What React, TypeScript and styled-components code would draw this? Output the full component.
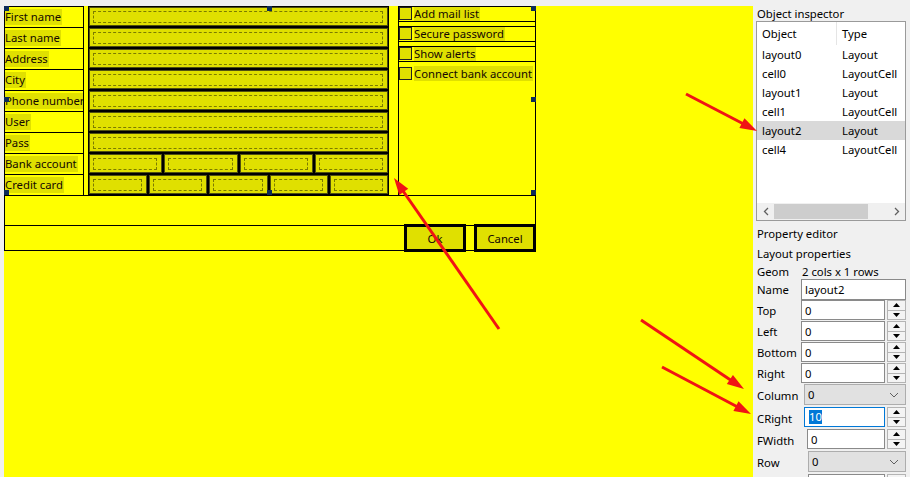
import React from "react";
import styled, { createGlobalStyle, css } from "styled-components";

const GlobalStyle = createGlobalStyle`
  html, body { margin: 0; padding: 0; background: #f0f0f0; }
  body {
    font-family: "Noto Sans", "Open Sans", sans-serif;
    font-size: 11.3px;
    color: #000;
    overflow: hidden;
  }
  * { box-sizing: border-box; }
`;

const Screen = styled.div`
  position: relative;
  width: 910px;
  height: 477px;
  display: flex;
  background: #f0f0f0;
  overflow: hidden;
`;

/* ---------- design canvas ---------- */

const DesignArea = styled.div`
  width: 753px;
  flex: none;
  padding: 6px 0 0 4px;
  display: flex;
`;

const Canvas = styled.div`
  flex: 1;
  height: 471px;
  background: #ffff00;
`;

const FormFrame = styled.div`
  width: 532px;
  display: flex;
  flex-direction: column;
  & > * { flex-shrink: 0; }
`;

const TopSection = styled.div`
  position: relative;
  height: 189px;
  display: grid;
  grid-template-columns: 80px 1fr 138px;
`;

const LabelsCol = styled.div`
  border-left: 1px solid #000;
  border-right: 1px solid #000;
  display: flex;
  flex-direction: column;
`;

const LabelCell = styled.div`
  height: 21px;
  flex: none;
  border-top: 1px solid #000;
  overflow: hidden;
  white-space: nowrap;
`;

const Highlight = styled.span`
  display: inline-block;
  background: #e0e000;
  line-height: 16px;
  margin-top: 2px;
  padding-right: 1px;
  color: #140800;
`;

const InputsCol = styled.div`
  margin: 0 9px 0 4px;
  display: flex;
  flex-direction: column;
`;

const FieldRow = styled.div`
  height: 21px;
  flex: none;
  display: flex;
`;

const FieldBox = styled.div`
  flex: 1;
  border: 1px solid #000;
  box-shadow: inset 0 0 0 1px #505010;
  background: #e0e000;
  padding: 4px 5px 3px 4px;
  display: flex;
`;

const DashRect = styled.div`
  flex: 1;
  border: 1px dashed #7c7c00;
`;

const ChecksPanel = styled.div`
  border-left: 1px solid #000;
  border-right: 1px solid #000;
  display: flex;
  flex-direction: column;
  gap: 4px;
`;

const CheckRow = styled.div<{ $bare?: boolean }>`
  height: 16px;
  flex: none;
  display: flex;
  align-items: flex-start;
  white-space: nowrap;
  overflow: hidden;
  ${(p) =>
    p.$bare
      ? css`padding-top: 0;`
      : css`
          border-top: 1px solid #000;
          border-bottom: 1px solid #000;
        `}
`;

const CheckBox = styled.span<{ $bare?: boolean }>`
  flex: none;
  width: 13px;
  height: 13px;
  margin-top: ${(p) => (p.$bare ? 1 : 0)}px;
  border: 1px solid #222;
  background: #e0e000;
`;

const CheckText = styled.span<{ $bare?: boolean }>`
  margin-left: 2px;
  background: #e0e000;
  line-height: ${(p) => (p.$bare ? 15 : 14)}px;
  padding-right: 1px;
  overflow: hidden;
  color: #140800;
`;

const EmptyRow = styled.div`
  height: 30px;
  border-top: 1px solid #000;
  border-left: 1px solid #000;
  border-right: 1px solid #000;
`;

const ButtonsRow = styled.div`
  height: 26px;
  border-top: 1px solid #000;
  border-left: 1px solid #000;
  border-bottom: 1px solid #000;
  display: flex;
  justify-content: flex-end;
  align-items: flex-start;
  gap: 8px;
`;

const DesignButton = styled.div`
  width: 62px;
  height: 28px;
  margin-top: -2px;
  border: 3px solid #000;
  background: #e0e000;
  display: flex;
  align-items: center;
  justify-content: center;
  color: #140800;
`;

const Handle = styled.span<{ $x: "l" | "c" | "r"; $y: "t" | "m" | "b" }>`
  position: absolute;
  width: 5px;
  height: 5px;
  background: #0c2b58;
  left: ${(p) => (p.$x === "l" ? "0" : p.$x === "c" ? "263px" : "auto")};
  right: ${(p) => (p.$x === "r" ? "0" : "auto")};
  top: ${(p) => (p.$y === "t" ? "0" : p.$y === "m" ? "91px" : "auto")};
  bottom: ${(p) => (p.$y === "b" ? "0" : "auto")};
`;

/* ---------- inspector panel ---------- */

const Inspector = styled.aside`
  width: 157px;
  flex: none;
  padding: 6px 4px 0 3px;
  display: flex;
  flex-direction: column;
  white-space: nowrap;
  & > * { flex-shrink: 0; }
`;

const PanelTitle = styled.div<{ $h: number }>`
  height: ${(p) => p.$h}px;
  line-height: ${(p) => p.$h}px;
  padding-left: 1px;
`;

const ListBox = styled.div`
  width: 150px;
  height: 200px;
  border: 1px solid #9a9a9a;
  background: #fff;
  display: flex;
  flex-direction: column;
  margin-bottom: 3px;
  & > * { flex-shrink: 0; }
`;

const ListGrid = styled.div<{ $h: number; $selected?: boolean }>`
  height: ${(p) => p.$h}px;
  display: grid;
  grid-template-columns: 80px 1fr;
  align-items: center;
  background: ${(p) => (p.$selected ? "#d9d9d9" : "transparent")};
`;

const ListCell = styled.div<{ $divider?: boolean }>`
  padding-left: 5px;
  height: 100%;
  display: flex;
  align-items: center;
  overflow: hidden;
  ${(p) => p.$divider && css`border-right: 1px solid #e5e5e5;`}
`;

const ListSpacer = styled.div`
  flex: 1 1 auto !important;
`;

const HScroll = styled.div`
  height: 17px;
  background: #f0f0f0;
  display: flex;
  align-items: center;
`;

const ScrollArrow = styled.div`
  width: 17px;
  height: 17px;
  display: flex;
  align-items: center;
  justify-content: center;
`;

const ScrollTrack = styled.div`
  flex: 1;
  height: 17px;
  padding: 1px 0;
  display: flex;
`;

const ScrollThumb = styled.div`
  width: 94px;
  background: #cdcdcd;
`;

const PropRow = styled.div<{ $h: number; $labelW: number }>`
  height: ${(p) => p.$h}px;
  display: grid;
  grid-template-columns: ${(p) => p.$labelW}px 1fr;
  align-items: start;
`;

const PropLabel = styled.div<{ $h: number }>`
  padding-left: 1px;
  height: ${(p) => p.$h}px;
  display: flex;
  align-items: center;
`;

const Editor = styled.div`
  display: flex;
  gap: 2px;
`;

const TextInput = styled.div<{ $h?: number; $focus?: boolean }>`
  flex: 1;
  height: ${(p) => p.$h ?? 20}px;
  background: #fff;
  border: 1px solid ${(p) => (p.$focus ? "#0078d7" : "#8a8a8a")};
  padding-left: 3px;
  display: flex;
  align-items: center;
`;

const Selected = styled.span`
  background: #0078d7;
  color: #fff;
  margin-left: 1px;
  line-height: 14px;
`;

const Spin = styled.div`
  width: 19px;
  height: 20px;
  display: flex;
  flex-direction: column;
`;

const SpinBtn = styled.div`
  flex: 1;
  border: 1px solid #b4b4b4;
  background: #f4f4f4;
  display: flex;
  align-items: center;
  justify-content: center;
  & + & {
    border-top: none;
  }
`;

const Combo = styled.div<{ $h?: number }>`
  flex: 1;
  height: ${(p) => p.$h ?? 21}px;
  background: #e1e1e1;
  border: 1px solid #adadad;
  padding: 0 6px 0 3px;
  display: flex;
  align-items: center;
  justify-content: space-between;
`;

/* ---------- overlay ---------- */

const Overlay = styled.svg`
  position: absolute;
  left: 0;
  top: 0;
  pointer-events: none;
`;

/* ---------- small drawings ---------- */

const Chevron = ({ dir }: { dir: "left" | "right" | "down" }) => {
  if (dir === "down")
    return (
      <svg width="10" height="6" viewBox="0 0 10 6">
        <polyline points="1,1 5,5 9,1" fill="none" stroke="#606060" strokeWidth="1" />
      </svg>
    );
  const pts = dir === "left" ? "5,1 1.5,4.5 5,8" : "1,1 4.5,4.5 1,8";
  return (
    <svg width="6" height="9" viewBox="0 0 6 9">
      <polyline points={pts} fill="none" stroke="#606060" strokeWidth="1.3" />
    </svg>
  );
};

const Tri = ({ up }: { up?: boolean }) => (
  <svg width="7" height="4" viewBox="0 0 7 4">
    <polygon points={up ? "0,4 7,4 3.5,0" : "0,0 7,0 3.5,4"} fill="#000" />
  </svg>
);

const SpinBox = () => (
  <Spin>
    <SpinBtn>
      <Tri up />
    </SpinBtn>
    <SpinBtn>
      <Tri />
    </SpinBtn>
  </Spin>
);

type ArrowDef = { x1: number; y1: number; x2: number; y2: number };

const RedArrow = ({ x1, y1, x2, y2 }: ArrowDef) => {
  const dx = x2 - x1;
  const dy = y2 - y1;
  const len = Math.hypot(dx, dy);
  const ux = dx / len;
  const uy = dy / len;
  const hl = 17;
  const hw = 5.5;
  const bx = x2 - ux * hl;
  const by = y2 - uy * hl;
  const px = -uy;
  const py = ux;
  const pts = `${x2},${y2} ${bx + px * hw},${by + py * hw} ${bx - px * hw},${by - py * hw}`;
  return (
    <g>
      <line x1={x1} y1={y1} x2={bx + ux * 3} y2={by + uy * 3} stroke="#f01414" strokeWidth="3" />
      <polygon points={pts} fill="#f01414" />
    </g>
  );
};

/* ---------- data ---------- */

const labels = [
  "First name",
  "Last name",
  "Address",
  "City",
  "Phone number",
  "User",
  "Pass",
  "Bank account",
  "Credit card",
];
const fieldCounts = [1, 1, 1, 1, 1, 1, 1, 4, 5];
const checks = ["Add mail list", "Secure password", "Show alerts", "Connect bank account"];

const objects = [
  ["layout0", "Layout"],
  ["cell0", "LayoutCell"],
  ["layout1", "Layout"],
  ["cell1", "LayoutCell"],
  ["layout2", "Layout"],
  ["cell4", "LayoutCell"],
];

const arrows: ArrowDef[] = [
  { x1: 686, y1: 94, x2: 757, y2: 131 },
  { x1: 499, y1: 329, x2: 394, y2: 178 },
  { x1: 641, y1: 320, x2: 744, y2: 389 },
  { x1: 662, y1: 367, x2: 751, y2: 414 },
];

export default function App() {
  const handles: Array<["l" | "c" | "r", "t" | "m" | "b"]> = [
    ["l", "t"],
    ["c", "t"],
    ["r", "t"],
    ["l", "m"],
    ["r", "m"],
    ["l", "b"],
    ["c", "b"],
    ["r", "b"],
  ];

  return (
    <>
      <GlobalStyle />
      <Screen>
        <DesignArea>
          <Canvas>
            <FormFrame>
              <TopSection>
                <LabelsCol>
                  {labels.map((l) => (
                    <LabelCell key={l}>
                      <Highlight>{l}</Highlight>
                    </LabelCell>
                  ))}
                </LabelsCol>
                <InputsCol>
                  {fieldCounts.map((n, i) => (
                    <FieldRow key={i}>
                      {Array.from({ length: n }).map((_, j) => (
                        <FieldBox key={j}>
                          <DashRect />
                        </FieldBox>
                      ))}
                    </FieldRow>
                  ))}
                </InputsCol>
                <ChecksPanel>
                  {checks.map((c, i) => {
                    const bare = i === checks.length - 1;
                    return (
                      <CheckRow key={c} $bare={bare}>
                        <CheckBox $bare={bare} />
                        <CheckText $bare={bare}>{c}</CheckText>
                      </CheckRow>
                    );
                  })}
                </ChecksPanel>
                {handles.map(([x, y]) => (
                  <Handle key={x + y} $x={x} $y={y} />
                ))}
              </TopSection>
              <EmptyRow />
              <ButtonsRow>
                <DesignButton>Ok</DesignButton>
                <DesignButton>Cancel</DesignButton>
              </ButtonsRow>
            </FormFrame>
          </Canvas>
        </DesignArea>

        <Inspector>
          <PanelTitle $h={15}>Object inspector</PanelTitle>
          <ListBox>
            <ListGrid $h={23}>
              <ListCell $divider>Object</ListCell>
              <ListCell>Type</ListCell>
            </ListGrid>
            {objects.map(([o, t]) => (
              <ListGrid key={o} $h={19} $selected={o === "layout2"}>
                <ListCell>{o}</ListCell>
                <ListCell>{t}</ListCell>
              </ListGrid>
            ))}
            <ListSpacer />
            <HScroll>
              <ScrollArrow>
                <Chevron dir="left" />
              </ScrollArrow>
              <ScrollTrack>
                <ScrollThumb />
              </ScrollTrack>
              <ScrollArrow>
                <Chevron dir="right" />
              </ScrollArrow>
            </HScroll>
          </ListBox>
          <PanelTitle $h={20}>Property editor</PanelTitle>
          <PanelTitle $h={20}>Layout properties</PanelTitle>
          <PropRow $h={15} $labelW={45}>
            <PropLabel $h={15}>Geom</PropLabel>
            <PropLabel $h={15}>2 cols x 1 rows</PropLabel>
          </PropRow>
          <PropRow $h={21} $labelW={45}>
            <PropLabel $h={21}>Name</PropLabel>
            <Editor>
              <TextInput $h={21}>layout2</TextInput>
            </Editor>
          </PropRow>
          {["Top", "Left", "Bottom", "Right"].map((k) => (
            <PropRow key={k} $h={21} $labelW={45}>
              <PropLabel $h={21}>{k}</PropLabel>
              <Editor>
                <TextInput>0</TextInput>
                <SpinBox />
              </Editor>
            </PropRow>
          ))}
          <PropRow $h={23} $labelW={48}>
            <PropLabel $h={23}>Column</PropLabel>
            <Editor>
              <Combo>
                <span>0</span>
                <Chevron dir="down" />
              </Combo>
            </Editor>
          </PropRow>
          <PropRow $h={22} $labelW={48}>
            <PropLabel $h={22}>CRight</PropLabel>
            <Editor>
              <TextInput $focus>
                <Selected>10</Selected>
              </TextInput>
              <SpinBox />
            </Editor>
          </PropRow>
          <PropRow $h={22} $labelW={51}>
            <PropLabel $h={22}>FWidth</PropLabel>
            <Editor>
              <TextInput>0</TextInput>
              <SpinBox />
            </Editor>
          </PropRow>
          <PropRow $h={23} $labelW={52}>
            <PropLabel $h={23}>Row</PropLabel>
            <Editor>
              <Combo>
                <span>0</span>
                <Chevron dir="down" />
              </Combo>
            </Editor>
          </PropRow>
          <PropRow $h={22} $labelW={52}>
            <PropLabel $h={22} />
            <Editor>
              <TextInput />
              <SpinBox />
            </Editor>
          </PropRow>
        </Inspector>

        <Overlay width="910" height="477" viewBox="0 0 910 477">
          {arrows.map((a, i) => (
            <RedArrow key={i} {...a} />
          ))}
        </Overlay>
      </Screen>
    </>
  );
}
